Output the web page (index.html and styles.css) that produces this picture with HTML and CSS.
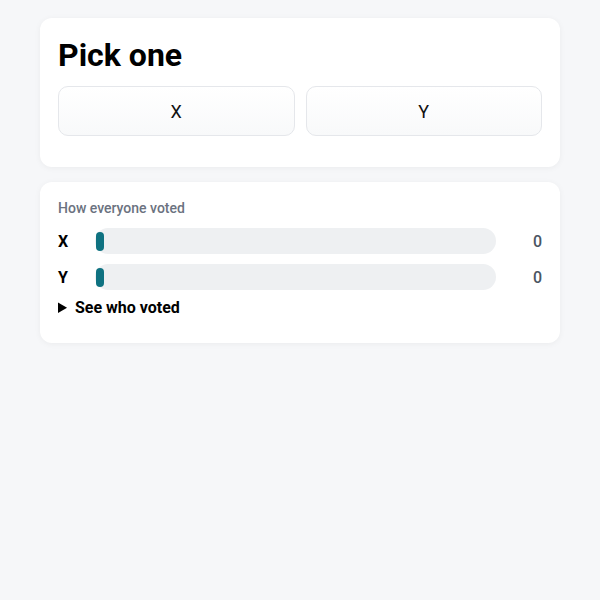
FILE: index.html
```html
<!DOCTYPE html>
<html lang="en">
<head>
  <meta charset="UTF-8" />
  <meta name="viewport" content="width=device-width, initial-scale=1" />
  <title>Pick one</title>
  <link rel="stylesheet" href="styles.css">
</head>
<body>
  <div class="card">
    <h1>Pick one</h1>
    <div class="choices">
      <button class="choice">X</button>
      <button class="choice">Y</button>
    </div>
  </div>

  <div class="card results">
    <div class="results-title">How everyone voted</div>
    <div class="row">
      <span class="label">X</span>
      <div class="bar"><div class="fill"></div></div>
      <span class="count">0</span>
    </div>
    <div class="row">
      <span class="label">Y</span>
      <div class="bar"><div class="fill"></div></div>
      <span class="count">0</span>
    </div>
    <details>
      <summary>See who voted</summary>
    </details>
  </div>
</body>
</html>
```

FILE: styles.css
```css
body {
  font-family: Roboto, "Liberation Sans", sans-serif;
  background: #f6f7f9;
  margin: 0;
  padding: 18px 40px;
  color: #000;
}
.card {
  background: white;
  border-radius: 12px;
  box-shadow: 0 1px 6px rgba(0,0,0,0.05);
  padding: 18px 18px 31px;
  margin-bottom: 15px;
}
h1 {
  font-size: 32px;
  font-weight: 700;
  margin: 0 0 12px;
  line-height: 38px;
}
.choices {
  display: grid;
  grid-template-columns: 1fr 1fr;
  gap: 11px;
}
.choice {
  height: 50px;
  border: 1px solid #e5e7eb;
  border-radius: 10px;
  background: linear-gradient(#ffffff, #f8f9fa);
  font-family: inherit;
  font-size: 18px;
  color: #111;
  cursor: pointer;
}
.results {
  padding: 18px 18px 26px;
}
.results-title {
  font-size: 14px;
  font-weight: 500;
  color: #6b7280;
  margin-bottom: 12px;
}
.row {
  display: flex;
  align-items: center;
  margin-bottom: 10px;
}
.row:last-of-type {
  margin-bottom: 8px;
}
.label {
  width: 37px;
  font-size: 16px;
  font-weight: 700;
}
.bar {
  flex: 1;
  height: 26px;
  background: #eef0f2;
  border-radius: 13px;
  display: flex;
  align-items: center;
}
.fill {
  width: 8px;
  height: 19px;
  margin-left: 1px;
  background: #0f7281;
  border-radius: 4px;
}
.count {
  width: 46px;
  text-align: right;
  font-size: 16px;
  font-weight: 500;
  color: #4b5563;
}
summary {
  font-size: 16px;
  font-weight: 700;
  cursor: pointer;
}
```
